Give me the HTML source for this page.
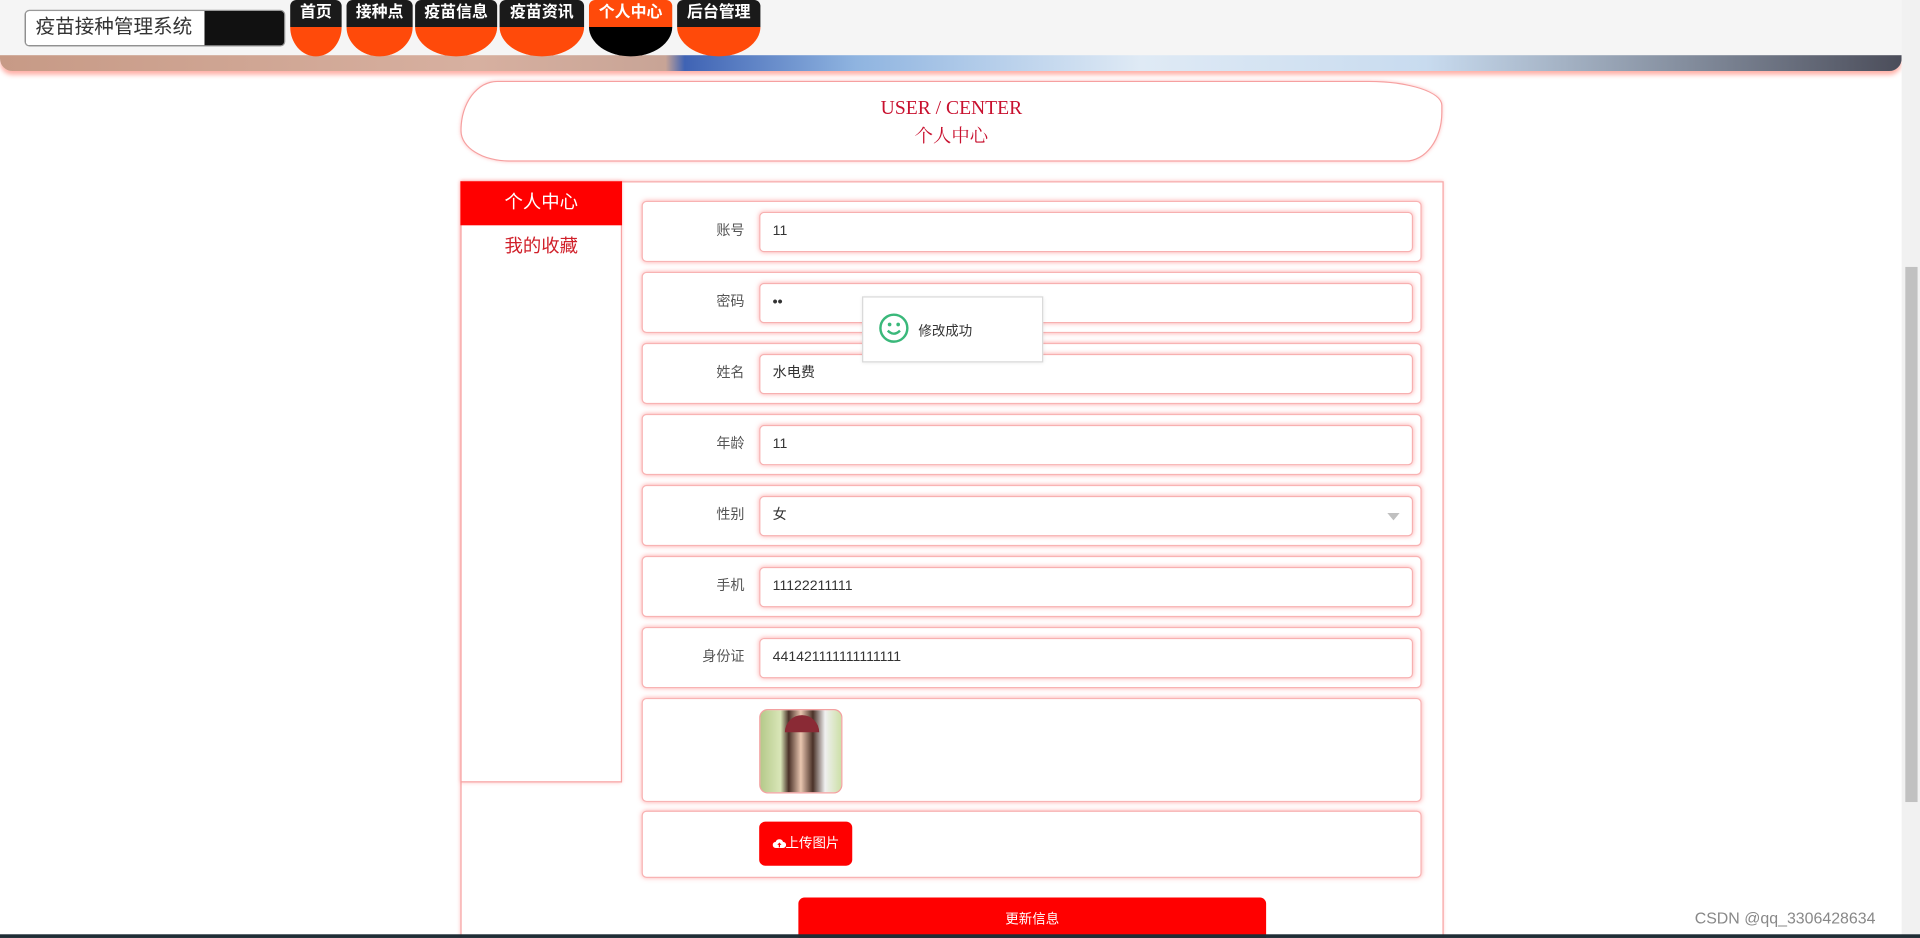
<!DOCTYPE html>
<html><head><meta charset="utf-8"><style>
html,body{margin:0;padding:0;width:1920px;height:938px;overflow:hidden;background:#fff;}
#w{position:absolute;left:0;top:0;width:1568px;height:766px;overflow:hidden;transform:scale(1.22449);transform-origin:0 0;font-family:"Liberation Sans","Noto Sans CJK SC",sans-serif;}
.a{position:absolute;box-sizing:border-box;}
.top{left:0;top:0;width:1553px;height:45px;background:#f5f5f5;}
.banner{left:0;top:45px;width:1553px;height:13px;border-radius:0 0 10px 10px;background:linear-gradient(90deg,#c79a86 0%,#d7b0a0 25%,#c8a496 35%,#3f63b4 36%,#8fb4e0 45%,#dfeaf5 60%,#c8dbef 75%,#4b4d5a 100%);box-shadow:0 3px 4px rgba(255,80,60,.45);}
.logo{left:20px;top:8px;width:213px;height:30px;border:1px solid #999;border-radius:4px;background:#111;overflow:hidden;}
.logo span{display:block;width:146px;height:100%;background:#fff;font-size:16px;line-height:28px;padding-left:8px;box-sizing:border-box;color:#333;}
.nav{top:0;height:46px;}
.nav .t{height:22px;background:#1a1a1a;color:#fff;font-size:13px;font-weight:bold;text-align:center;line-height:20px;border-radius:5px 5px 0 0;}
.nav .b{height:24px;background:#ff4a0a;border-radius:0 0 50% 50%/0 0 100% 100%;}
.nav.on .t{background:#ff4a0a;}.nav.on .b{background:#000;}
.title{left:376px;top:66px;width:802px;height:66px;border:1px solid #f6a0a0;border-radius:30px 60px 30px 40px/40px 20px 40px 25px;box-shadow:0 0 3px rgba(255,100,100,.4);text-align:center;font-family:"Liberation Serif","Noto Serif CJK SC",serif;color:#c8102e;}
.main{left:376px;top:148px;width:803px;height:640px;border:1px solid #f7a3a3;box-shadow:0 0 3px rgba(255,120,120,.5);}
.side{left:376px;top:148px;width:132px;height:491px;border:1px solid #f7a3a3;border-top:0;background:#fff;box-shadow:0 0 3px rgba(255,120,120,.5);}
.row{left:524px;width:637px;height:50px;border:1px solid #f8b3b3;border-radius:4px;box-shadow:0 0 4px rgba(255,100,100,.5);background:#fff;}
.row .l{position:absolute;right:552px;top:0;line-height:48px;font-size:11.5px;color:#555;}
.row .i{position:absolute;left:95px;top:8px;width:534px;height:33px;border:1px solid #f7b0b0;border-radius:4px;box-shadow:0 0 4px rgba(255,100,100,.5);font-size:11.5px;color:#333;line-height:31px;padding-left:10px;box-sizing:border-box;}
</style></head><body><div id="w">
<div class="a banner"></div>
<div class="a top"></div>
<div class="a logo"><span>疫苗接种管理系统</span></div>
<div class="a nav" style="left:237px;width:42px"><div class="t">首页</div><div class="b"></div></div>
<div class="a nav" style="left:283px;width:54px"><div class="t">接种点</div><div class="b"></div></div>
<div class="a nav" style="left:339px;width:67px"><div class="t">疫苗信息</div><div class="b"></div></div>
<div class="a nav" style="left:408px;width:69px"><div class="t">疫苗资讯</div><div class="b"></div></div>
<div class="a nav on" style="left:481px;width:68px"><div class="t">个人中心</div><div class="b"></div></div>
<div class="a nav" style="left:553px;width:68px"><div class="t">后台管理</div><div class="b"></div></div>
<div class="a title"><div style="margin-top:13px;font-size:16px">USER / CENTER</div><div style="font-size:15px;margin-top:2px;">个人中心</div></div>
<div class="a main"></div>
<div class="a side"><div style="background:#f00;color:#fff;height:36px;line-height:36px;text-align:center;font-size:15px;margin:0 -1px;">个人中心</div><div style="color:#d0202a;text-align:center;font-size:15px;line-height:36px;">我的收藏</div></div>
<div class="a row" style="top:164px"><div class="l">账号</div><div class="i">11</div></div>
<div class="a row" style="top:222px"><div class="l">密码</div><div class="i" style="font-weight:bold">••</div></div>
<div class="a row" style="top:280px"><div class="l">姓名</div><div class="i">水电费</div></div>
<div class="a row" style="top:338px"><div class="l">年龄</div><div class="i">11</div></div>
<div class="a row" style="top:396px"><div class="l">性别</div><div class="i">女<span style="position:absolute;right:10px;top:13px;border:5px solid transparent;border-top:6px solid #c0c0c0;border-bottom:0"></span></div></div>
<div class="a row" style="top:454px"><div class="l">手机</div><div class="i">11122211111</div></div>
<div class="a row" style="top:512px"><div class="l">身份证</div><div class="i">441421111111111111</div></div>
<div class="a row" style="top:570px;height:85px"><div style="position:absolute;left:95px;top:8px;width:66px;height:67px;border-radius:7px;border:1px solid #f3a0a0;overflow:hidden;background:linear-gradient(90deg,#b5c98a 0%,#d9e6b8 25%,#4a3128 35%,#e9c6b0 50%,#4a3128 65%,#f0f0f0 80%,#cde0a8 100%);"><div style="position:absolute;left:20px;top:4px;width:28px;height:14px;background:#8a2a35;border-radius:14px 14px 0 0"></div></div></div>
<div class="a row" style="top:662px;height:55px"><div style="position:absolute;left:95px;top:8px;width:76px;height:36px;background:#f00;border-radius:5px;color:#fff;font-size:11px;line-height:36px;text-align:center;"><svg width="11" height="9" viewBox="0 0 11 9" style="vertical-align:-1px"><path d="M2.5 8.5 A2.5 2.5 0 0 1 2.5 3.5 A3.2 3.2 0 0 1 8.5 3.5 A2.5 2.5 0 0 1 8.5 8.5 Z" fill="#fff"/><path d="M5.5 4 L3.8 6 H5 V8 H6 V6 H7.2 Z" fill="#f00"/></svg>上传图片</div></div>
<div class="a" style="left:652px;top:733px;width:382px;height:40px;background:#f00;border-radius:5px;color:#fff;font-size:11px;text-align:center;line-height:36px;">更新信息</div>
<div class="a" style="left:704px;top:242px;width:148px;height:54px;background:#fff;border:1px solid #d9d9d9;box-shadow:0 1px 3px rgba(0,0,0,.08);">
<svg style="position:absolute;left:12px;top:12px" width="26" height="26" viewBox="0 0 26 26"><circle cx="13" cy="13" r="11" fill="none" stroke="#3ab87a" stroke-width="2"/><circle cx="9.5" cy="10" r="1.5" fill="#3ab87a"/><circle cx="16.5" cy="10" r="1.5" fill="#3ab87a"/><path d="M8 15 Q13 20 18 15" fill="none" stroke="#3ab87a" stroke-width="2"/></svg>
<span style="position:absolute;left:45px;top:19px;font-size:11px;color:#333">修改成功</span></div>
<div class="a" style="left:1553px;top:0;width:15px;height:766px;background:#f1f1f1"></div>
<div class="a" style="left:1556px;top:218px;width:10px;height:437px;background:#c1c1c1"></div>
<div class="a" style="left:0;top:763px;width:1568px;height:3px;background:#1f2d35"></div>
<div class="a" style="left:1384px;top:742px;font-size:13px;color:#888;">CSDN @qq_3306428634</div>
</div></body></html>
